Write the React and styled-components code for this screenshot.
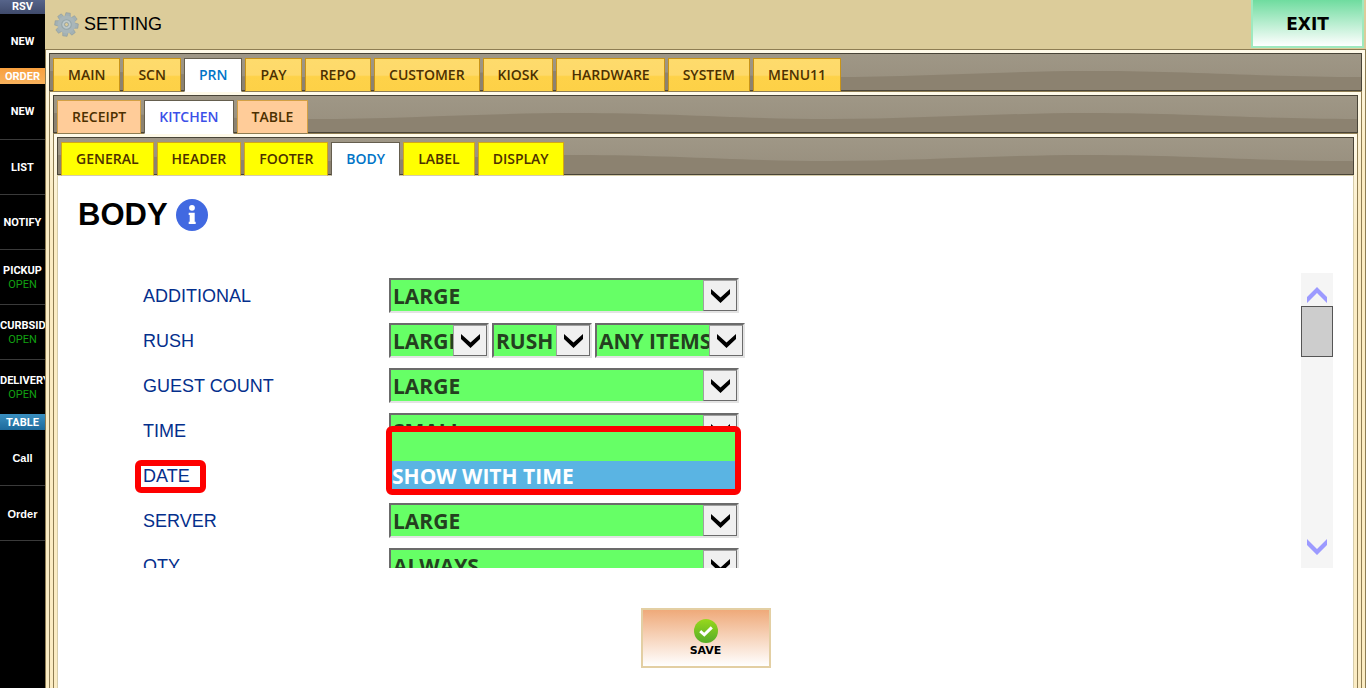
import React from "react";
import styled, { createGlobalStyle, css } from "styled-components";

const GlobalStyle = createGlobalStyle`
  * {
    box-sizing: border-box;
  }
  body {
    margin: 0;
    background: #fff;
    font-family: "Liberation Sans", Arial, sans-serif;
  }
`;

const Page = styled.div`
  display: flex;
  height: 100vh;
  min-height: 680px;
  overflow: hidden;
`;

const Sidebar = styled.nav`
  flex: 0 0 45px;
  background: #000;
  overflow: hidden;
  color: #fff;
`;

const sectionColors = {
  rsv: "linear-gradient(#56648a, #3f4a6b)",
  order: "linear-gradient(#f9a03f, #f7b15c)",
  table: "linear-gradient(#3a8fc0, #1d6a9c)",
};

const SectionTitle = styled.div`
  height: ${(p) => (p.$first ? 14 : 16)}px;
  font: bold 11px/${(p) => (p.$first ? 13 : 17)}px Roboto, sans-serif;
  text-align: center;
  background: ${(p) => sectionColors[p.$kind]};
`;

const SideButton = styled.button`
  display: flex;
  flex-direction: column;
  align-items: safe center;
  justify-content: center;
  width: 100%;
  height: 55px;
  padding: 1px 0 0;
  border: 0;
  background: transparent;
  color: #fff;
  font: bold 11px/14px ${(p) => (p.$kind === "table" ? '"Liberation Sans"' : "Roboto")}, sans-serif;
  white-space: nowrap;
  cursor: pointer;
  & + & {
    border-top: 1px solid #3a3a3a;
  }
`;

const SideGroup = styled.div`
  &:last-child {
    border-bottom: 1px solid #3a3a3a;
  }
  &:first-child ${SideButton} {
    height: 54px;
  }
`;

const OpenState = styled.span`
  color: #12a012;
  font-weight: normal;
`;

const Main = styled.main`
  flex: 1;
  min-width: 0;
  display: flex;
  flex-direction: column;
`;

const TopBar = styled.header`
  display: flex;
  align-items: flex-start;
  justify-content: space-between;
  height: 49px;
  padding-right: 2px;
  background: #dccc9a;
`;

const Title = styled.div`
  display: flex;
  align-items: center;
  gap: 5px;
  height: 48px;
  padding-left: 9px;
  color: #000;
  font-size: 18px;
`;

const ExitButton = styled.button`
  width: 113px;
  height: 48px;
  padding: 2px 0 0;
  border: 2px solid #9fe9bf;
  border-top: 0;
  background: linear-gradient(#6fdc9f, #fff);
  color: #000;
  font: bold 17px "DejaVu Sans", sans-serif;
  cursor: pointer;
`;

/* each level of tabs sits in the panel of the level above */
const Panel = styled.section`
  flex: 1;
  display: flex;
  flex-direction: column;
  border: 1px solid #8e7d53;
  border-bottom: 0;
  padding: 3px 3px 0;
  background: linear-gradient(#fffae9, #fbecc3 100px);
`;

const Content = styled.section`
  flex: 1;
  border: 1px solid #d6cdab;
  border-bottom: 0;
  background: #fff;
`;

const Strip = styled.div`
  position: relative;
  display: flex;
  align-items: flex-start;
  gap: 3px;
  height: 38px;
  padding: 4px 3px 0;
  border: 1px solid #494437;
  background: linear-gradient(#9f9786, #978e7d);
`;

const Wave = styled.svg`
  position: absolute;
  inset: 0;
  width: 100%;
  height: 100%;
`;

const tabColors = {
  gold: css`
    background: linear-gradient(#fedb6c, #fed96a 50%, #fed249 55%, #fdd147);
    border-color: #c99417;
    border-bottom-color: #8e7d53;
    color: #4c3000;
  `,
  peach: css`
    background: #ffcc99;
    border-color: #d3a044;
    border-bottom-color: #8e7d53;
    color: #4c3000;
  `,
  yellow: css`
    background: #ffff00;
    border-color: #d3a716;
    border-bottom-color: #d6cdab;
    color: #4c3000;
  `,
  active: css`
    background: #fff;
    border-color: #655e4e;
    border-bottom-color: #fff;
    color: ${(p) => p.$activeColor || "#0074c7"};
  `,
};

const Tab = styled.button`
  position: relative;
  height: 34px;
  padding: 0 14px;
  border: 1px solid;
  font: 600 14px/32px "Open Sans", "Noto Sans", sans-serif;
  white-space: nowrap;
  cursor: pointer;
  ${(p) => tabColors[p.$active ? "active" : p.$tone]}
`;

const Heading = styled.h1`
  display: flex;
  align-items: center;
  gap: 8px;
  margin: 23px 0 42px 20px;
  font-size: 31px;
  line-height: 32px;
  color: #000;
`;

const ScrollArea = styled.div`
  display: flex;
  justify-content: space-between;
  height: 295px;
  margin: 0 20px 0 77px;
  padding-left: 8px;
  overflow: hidden;
`;

const Row = styled.div`
  display: grid;
  grid-template-columns: 246px auto;
  align-items: center;
  height: 45px;
`;

const RowLabel = styled.label`
  padding-top: 1px;
  color: #042f8c;
  font-size: 18px;
  line-height: 20px;
`;

const MarkedLabel = styled(RowLabel)`
  justify-self: start;
  margin: 2px 0 0 -8px;
  padding: 0 10px 0 2px;
  border: 6px solid #fe0000;
  border-radius: 6px;
  line-height: 21px;
`;

const Fields = styled.div`
  position: relative;
  display: flex;
  gap: 3px;
`;

const SelectBox = styled.div`
  display: grid;
  width: ${(p) => p.$width}px;
  height: 35px;
  > * {
    grid-area: 1 / 1;
  }
`;

const Select = styled.select`
  appearance: none;
  min-width: 0;
  height: 35px;
  padding: 2px 34px 0 2px;
  border: 2px solid;
  border-color: #6b6b6b #e3e3e3 #e3e3e3 #6b6b6b;
  border-radius: 0;
  background: #66ff66;
  color: #24401f;
  font: bold 21px/29px "Open Sans", "Noto Sans", sans-serif;
`;

const ArrowBox = styled.span`
  display: flex;
  align-items: center;
  justify-content: center;
  justify-self: end;
  width: 34px;
  height: 31px;
  margin: 2px 2px 0 0;
  border: 1px solid #6b6b6b;
  border-top-color: #a0a0a0;
  border-left-color: #a0a0a0;
  background: #f0f0f0;
  pointer-events: none;
`;

const OptionList = styled.ul`
  position: absolute;
  z-index: 2;
  left: -3px;
  bottom: -2px;
  width: 355px;
  margin: 0;
  padding: 0;
  border: 6px solid #fe0000;
  border-radius: 6px;
  background: #66ff66;
  list-style: none;
`;

const Option = styled.li`
  height: ${(p) => (p.$selected ? 28 : 29)}px;
  background: ${(p) => (p.$selected ? "#5ab4e3" : "#66ff66")};
  color: #fff;
  font: bold 21px/30px "Open Sans", "Noto Sans", sans-serif;
`;

const ScrollBar = styled.div`
  display: flex;
  flex-direction: column;
  width: 32px;
  background: #f5f5f5;
`;

const ScrollButton = styled.button`
  display: flex;
  justify-content: center;
  align-items: center;
  height: 33px;
  padding: ${(p) => (p.$down ? "0 0 10px" : "10px 0 0")};
  border: 0;
  background: transparent;
`;

const ScrollThumb = styled.div`
  height: 51px;
  margin-bottom: auto;
  border: 1px solid #555;
  background: #cdcdcd;
`;

const SaveButton = styled.button`
  display: flex;
  flex-direction: column;
  align-items: center;
  justify-content: center;
  gap: 1px;
  width: 130px;
  height: 60px;
  margin: 40px auto 0;
  padding: 0;
  border: 2px solid #e3cfa3;
  background: linear-gradient(#efaa7a, #fff);
  color: #000;
  font: bold 11px/13px "DejaVu Sans", sans-serif;
  cursor: pointer;
`;

const sections = [
  { kind: "rsv", title: "RSV", items: [{ name: "NEW" }] },
  {
    kind: "order",
    title: "ORDER",
    items: [
      { name: "NEW" },
      { name: "LIST" },
      { name: "NOTIFY" },
      { name: "PICKUP", open: true },
      { name: "CURBSIDE", open: true },
      { name: "DELIVERY", open: true },
    ],
  },
  { kind: "table", title: "TABLE", items: [{ name: "Call" }, { name: "Order" }] },
];

const mainTabs = ["MAIN", "SCN", "PRN", "PAY", "REPO", "CUSTOMER", "KIOSK", "HARDWARE", "SYSTEM", "MENU11"];
const printerTabs = ["RECEIPT", "KITCHEN", "TABLE"];
const kitchenTabs = ["GENERAL", "HEADER", "FOOTER", "BODY", "LABEL", "DISPLAY"];

const rows = [
  { label: "ADDITIONAL", fields: [{ value: "LARGE", width: 350 }] },
  {
    label: "RUSH",
    fields: [
      { value: "LARGE", width: 100 },
      { value: "RUSH", width: 100 },
      { value: "ANY ITEMS", width: 150 },
    ],
  },
  { label: "GUEST COUNT", fields: [{ value: "LARGE", width: 350 }] },
  { label: "TIME", fields: [{ value: "SMALL", width: 350 }] },
  { label: "DATE", fields: [{ value: "", width: 350 }], options: ["", "SHOW WITH TIME"] },
  { label: "SERVER", fields: [{ value: "LARGE", width: 350 }] },
  { label: "QTY", fields: [{ value: "ALWAYS", width: 350 }] },
];

const GearIcon = () => (
  <svg width="25" height="25" viewBox="0 0 24 24">
    <g fill="#a3b1b4" stroke="#8e9da1" strokeWidth="0.6">
      {[0, 45, 90, 135, 180, 225, 270, 315].map((a) => (
        <path key={a} d="M9.4 5 9.9.8h4.2l.5 4.2z" transform={`rotate(${a + 8} 12 12)`} />
      ))}
      <circle cx="12" cy="12" r="8.6" fill="#a9b6b9" stroke="none" />
    </g>
    <circle cx="12" cy="12" r="4.6" fill="#bcc8ca" stroke="#94a5a9" strokeWidth="1" />
    <circle cx="12" cy="12" r="1.9" fill="#dccc9a" stroke="#84969b" strokeWidth="0.7" />
  </svg>
);

const InfoIcon = () => (
  <svg width="32" height="32" viewBox="0 0 32 32">
    <circle cx="16" cy="16" r="16" fill="#4169e1" />
    <circle cx="16" cy="8.8" r="2.9" fill="#fff" />
    <path d="M12.7 13.8h6v9h1v2.3h-7v-2.3h1v-6.7h-1z" fill="#fff" />
  </svg>
);

const CheckIcon = () => (
  <svg width="24" height="24" viewBox="0 0 24 24">
    <defs>
      <linearGradient id="check" x1="0" y1="0" x2="0" y2="1">
        <stop offset="0" stopColor="#98d81c" />
        <stop offset="1" stopColor="#56ac28" />
      </linearGradient>
    </defs>
    <circle cx="12" cy="12" r="12" fill="url(#check)" />
    <path d="M6.2 12.2 10.3 15.8 17.8 8.4" fill="none" stroke="#fff" strokeWidth="3" />
  </svg>
);

const Chevron = ({ up }) => (
  <svg width="20" height="16" viewBox="0 0 20 16">
    <path d={up ? "M0 10 10 0 20 10V16L10 6 0 16z" : "M0 0 10 10 20 0V6L10 16 0 6z"} fill="#9c9aff" />
  </svg>
);

function Tabs({ label, tabs, active, tone, activeColor }) {
  return (
    <Strip role="tablist" aria-label={label}>
      <Wave viewBox="0 0 1310 36" preserveAspectRatio="none" aria-hidden="true">
        <path
          d="M0 17C90 17 160 23 258 23C350 23 430 17 525 17C620 17 690 23 780 23C870 23 950 17 1042 17C1140 17 1210 23 1310 23V36H0z"
          fill="#8c8270"
        />
      </Wave>
      {tabs.map((t) => (
        <Tab key={t} role="tab" aria-selected={t === active} $active={t === active} $tone={tone} $activeColor={activeColor}>
          {t}
        </Tab>
      ))}
    </Strip>
  );
}

function SelectField({ id, name, value, width }) {
  return (
    <SelectBox $width={width}>
      <Select id={id} aria-label={name} defaultValue={value}>
        <option>{value}</option>
      </Select>
      <ArrowBox>
        <svg width="19" height="14" viewBox="0 0 19 14">
          <path d="M0 0V5L9.5 14 19 5V0L9.5 8.5z" fill="#000" />
        </svg>
      </ArrowBox>
    </SelectBox>
  );
}

function SettingRow({ row }) {
  const id = row.label.toLowerCase().replace(" ", "-");
  const Label = row.options ? MarkedLabel : RowLabel;
  return (
    <Row>
      <Label htmlFor={id}>{row.label}</Label>
      <Fields>
        {row.fields.map((f, i) => (
          <SelectField key={i} id={i === 0 ? id : `${id}-${i}`} name={`${row.label} ${i + 1}`} {...f} />
        ))}
        {row.options && (
          <OptionList role="listbox" aria-label={row.label}>
            {row.options.map((o) => (
              <Option key={o} role="option" aria-selected={o !== ""} $selected={o !== ""}>
                {o}
              </Option>
            ))}
          </OptionList>
        )}
      </Fields>
    </Row>
  );
}

export default function App() {
  return (
    <Page>
      <GlobalStyle />
      <Sidebar>
        {sections.map((s, n) => (
          <SideGroup key={s.title}>
            <SectionTitle $kind={s.kind} $first={n === 0}>
              {s.title}
            </SectionTitle>
            {s.items.map((item) => (
              <SideButton key={item.name} $kind={s.kind}>
                {item.name}
                {item.open && <OpenState>OPEN</OpenState>}
              </SideButton>
            ))}
          </SideGroup>
        ))}
      </Sidebar>
      <Main>
        <TopBar>
          <Title>
            <GearIcon />
            SETTING
          </Title>
          <ExitButton>EXIT</ExitButton>
        </TopBar>
        <Panel>
          <Tabs label="Settings" tabs={mainTabs} active="PRN" tone="gold" />
          <Panel>
            <Tabs label="Printer" tabs={printerTabs} active="KITCHEN" tone="peach" activeColor="#3c50e8" />
            <Panel>
              <Tabs label="Kitchen" tabs={kitchenTabs} active="BODY" tone="yellow" />
              <Content>
                <Heading>
                  BODY
                  <InfoIcon />
                </Heading>
                <ScrollArea>
                  <div>
                    {rows.map((row) => (
                      <SettingRow key={row.label} row={row} />
                    ))}
                  </div>
                  <ScrollBar>
                    <ScrollButton aria-label="Scroll up">
                      <Chevron up />
                    </ScrollButton>
                    <ScrollThumb />
                    <ScrollButton aria-label="Scroll down" $down>
                      <Chevron />
                    </ScrollButton>
                  </ScrollBar>
                </ScrollArea>
                <SaveButton>
                  <CheckIcon />
                  SAVE
                </SaveButton>
              </Content>
            </Panel>
          </Panel>
        </Panel>
      </Main>
    </Page>
  );
}
